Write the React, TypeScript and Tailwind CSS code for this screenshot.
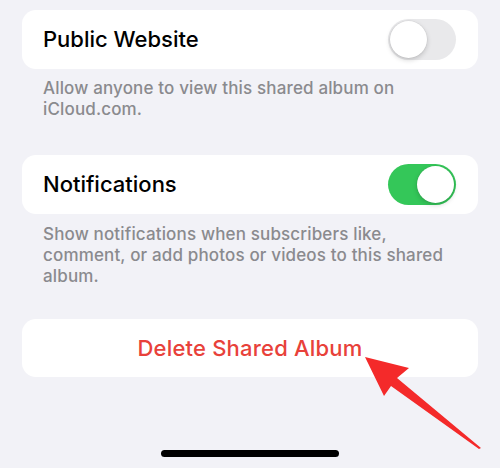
import React from 'react';

function Toggle({ on }: { on: boolean }) {
  return (
    <div
      className={`relative w-[68px] h-[41px] rounded-full flex items-center px-[2px] ${
        on ? 'bg-[#34c759] justify-end' : 'bg-[#e9e9eb] justify-start'
      }`}
    >
      <div className="w-[37px] h-[37px] rounded-full bg-white shadow-[0_2px_5px_rgba(0,0,0,0.18),0_0_0_0.5px_rgba(0,0,0,0.06)]" />
    </div>
  );
}

function Row({ label, on }: { label: string; on: boolean }) {
  return (
    <div className="h-[59px] rounded-[14px] bg-white flex items-center justify-between pl-[21px] pr-[22px]">
      <span className="text-[22px] font-medium text-black">{label}</span>
      <Toggle on={on} />
    </div>
  );
}

export default function App() {
  return (
    <div
      className="relative w-[500px] h-[468px] overflow-hidden bg-[#f2f2f7] px-[22px] pt-[10px] flex flex-col"
      style={{ fontFamily: 'Inter, "Noto Sans", "Liberation Sans", sans-serif' }}
    >
      {/* Public website */}
      <Row label="Public Website" on={false} />
      <p className="mt-[9px] px-[21px] text-[17px] leading-[21px] font-medium tracking-[0.15px] text-[#8a8a8e]">
        Allow anyone to view this shared album on iCloud.com.
      </p>

      {/* Notifications */}
      <div className="mt-[35px]">
        <Row label="Notifications" on={true} />
      </div>
      <p className="mt-[10px] pr-[30px] pl-[21px] text-[17px] leading-[21px] font-medium tracking-[0.15px] text-[#8a8a8e]">
        Show notifications when subscribers like, comment, or add photos or videos to this shared album.
      </p>

      {/* Delete */}
      <div className="mt-[32px] h-[58px] rounded-[14px] bg-white flex items-center justify-center">
        <span className="text-[22px] font-medium text-[#e8413a] tracking-[0.2px]">Delete Shared Album</span>
      </div>

      {/* Home indicator */}
      <div className="mt-auto mb-[11px] self-center w-[178px] h-[7px] rounded-full bg-black" />

      {/* Annotation arrow */}
      <svg className="absolute inset-0 pointer-events-none" width="500" height="468" viewBox="0 0 500 468">
        <polygon
          points="365,357 409,368 397,378 481,448 479,449 391,386 384,396"
          fill="#f42a2a"
        />
      </svg>
    </div>
  );
}
